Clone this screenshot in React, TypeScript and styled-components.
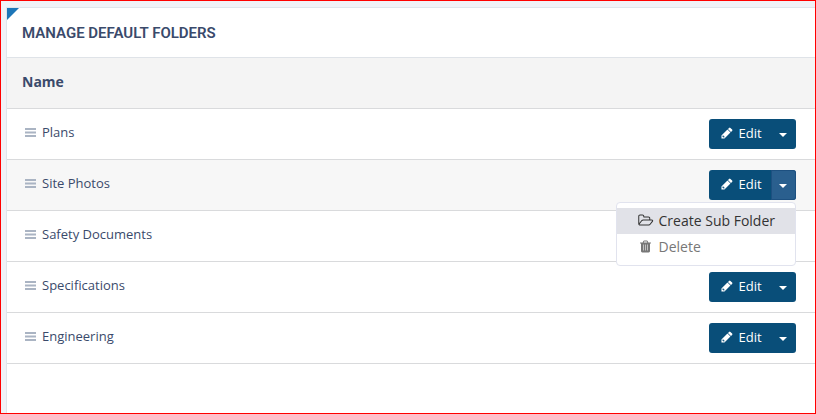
import React, { useState } from "react";
import styled, { createGlobalStyle } from "styled-components";

const GlobalStyle = createGlobalStyle`
  *, *::before, *::after { box-sizing: border-box; }
  body {
    margin: 0;
    font-family: "Open Sans", "Noto Sans", sans-serif;
    font-size: 13px;
    color: #3a4a6b;
  }
`;

const Page = styled.main`
  display: flex;
  min-height: 100vh;
  padding: 6px 0 0 5px;
  border: 1px solid #ff0000;
  background: #f0f2f7;
`;

const Panel = styled.section`
  position: relative;
  flex: 1;
  min-width: 0;
  border: solid #dfe5eb;
  border-width: 1px 0 0 1px;
  background: #ffffff;
`;

const Corner = styled.span`
  position: absolute;
  top: 0;
  left: 0;
  border-top: 12px solid #1d76b8;
  border-right: 12px solid transparent;
`;

const Title = styled.h1`
  margin: 0;
  padding: 2px 15px 0;
  border-bottom: 1px solid #dfe3e8;
  font-family: Roboto, "Open Sans", sans-serif;
  font-size: 15px;
  font-weight: 600;
  line-height: 47px;
  text-transform: uppercase;
`;

const Table = styled.table`
  width: 100%;
  border-collapse: separate;
  border-spacing: 0;
`;

const HeadCell = styled.th`
  height: 51px;
  padding: 0 15px 4px;
  border-bottom: 1px solid #d9dadc;
  background: #f4f4f4;
  font-size: 14px;
  font-weight: 700;
  text-align: left;
`;

const Row = styled.tr<{ $active: boolean }>`
  background: ${(p) => (p.$active ? "#f7f7f7" : "#ffffff")};
`;

const Cell = styled.td`
  height: 51px;
  padding: 10px 19px 10px 18px;
  border-bottom: 1px solid #d9dadc;
  vertical-align: top;
`;

const FolderName = styled.div`
  display: flex;
  align-items: center;
  gap: 6px;
  line-height: 26px;
`;

const Grip = styled.svg`
  display: block;
  width: 11px;
  height: 9px;
  fill: #aab4c3;
`;

const Actions = styled.div`
  position: relative;
  display: flex;
  justify-content: flex-end;
`;

const Button = styled.button`
  display: flex;
  align-items: center;
  justify-content: center;
  height: 30px;
  padding: 0;
  border: 0;
  background: #094e79;
  color: #ffffff;
  font: inherit;
  cursor: pointer;
`;

const EditButton = styled(Button)`
  gap: 5px;
  width: 62px;
  padding: 0 0 2px 3px;
  border-radius: 3px 0 0 3px;
`;

const ToggleButton = styled(Button)<{ $open: boolean }>`
  width: 25px;
  padding-right: 2px;
  border-radius: 0 3px 3px 0;
  background: ${(p) => (p.$open ? "#2a5f8e" : "#094e79")};
  box-shadow: ${(p) => (p.$open ? "inset 0 0 0 1px #1d5080" : "none")};
`;

const Caret = styled.span`
  margin-top: 2px;
  border: 4px solid transparent;
  border-top-color: #ffffff;
  border-bottom-width: 0;
`;

const Menu = styled.ul`
  position: absolute;
  top: calc(100% + 2px);
  right: 0;
  z-index: 1;
  min-width: 180px;
  margin: 0;
  padding: 5px 0;
  border: 1px solid #e1e3ee;
  border-radius: 4px;
  background: #ffffff;
  list-style: none;
`;

const MenuButton = styled.button<{ $highlighted: boolean }>`
  display: flex;
  align-items: center;
  gap: 4px;
  width: 100%;
  height: 26px;
  padding: 0 20px 2px;
  border: 0;
  background: ${(p) => (p.$highlighted ? "#e1e2e8" : "transparent")};
  color: ${(p) => (p.$highlighted ? "#333333" : "#777777")};
  font: inherit;
  font-size: 14px;
  white-space: nowrap;
  cursor: pointer;
`;

const Glyph = styled.svg<{ $width: number; $height: number }>`
  display: block;
  flex: none;
  width: ${(p) => p.$width}px;
  height: ${(p) => p.$height}px;
  fill: currentColor;
`;

const PencilIcon = () => (
  <Glyph $width={12} $height={12} viewBox="64 64 1664 1664" aria-hidden="true">
    <path d="M491 1536l91-91-235-235-91 91v107h128v128h107zM960 416l416 416-832 832h-416v-416zm683 96q0 53-37 90l-166 166-416-416 166-165q36-38 90-38 53 0 91 38l235 234q37 39 37 91z" />
  </Glyph>
);

const FolderIcon = () => (
  <Glyph $width={18} $height={14} viewBox="-96 -64 2304 1792" aria-hidden="true">
    <path d="M1845 931q0-35-53-35h-1088q-40 0-85.5 21.5t-71.5 52.5l-294 363q-18 24-18 40 0 35 53 35h1088q40 0 86-22t71-53l294-363q18-22 18-39zm-1141-163h768v-160q0-40-28-68t-68-28h-576q-40 0-68-28t-28-68v-64q0-40-28-68t-68-28h-320q-40 0-68 28t-28 68v853l256-315q44-53 116-87.5t140-34.5zm1269 163q0 62-46 120l-295 363q-43 53-116 87.5t-140 34.5h-1088q-92 0-158-66t-66-158v-960q0-92 66-158t158-66h320q92 0 158 66t66 158v32h544q92 0 158 66t66 158v160h192q54 0 99 24.5t67 70.5q15 32 15 68z" />
  </Glyph>
);

const TrashIcon = () => (
  <Glyph $width={18} $height={14} viewBox="-192 -64 2304 1792" aria-hidden="true">
    <path
      opacity="0.45"
      d="M512 512h768v952q0 72-32 72h-704q-32 0-32-72z"
    />
    <path d="M704 1376v-704q0-14-9-23t-23-9h-64q-14 0-23 9t-9 23v704q0 14 9 23t23 9h64q14 0 23-9t9-23zm256 0v-704q0-14-9-23t-23-9h-64q-14 0-23 9t-9 23v704q0 14 9 23t23 9h64q14 0 23-9t9-23zm256 0v-704q0-14-9-23t-23-9h-64q-14 0-23 9t-9 23v704q0 14 9 23t23 9h64q14 0 23-9t9-23zm-544-992h448l-48-117q-7-9-17-11h-317q-10 2-17 11zm928 32v64q0 14-9 23t-23 9h-96v948q0 83-47 143.5t-113 60.5h-832q-66 0-113-58.5t-47-141.5v-952h-96q-14 0-23-9t-9-23v-64q0-14 9-23t23-9h309l70-167q15-37 54-63t79-26h320q40 0 79 26t54 63l70 167h309q14 0 23 9t9 23z" />
  </Glyph>
);

const GripIcon = () => (
  <Grip viewBox="0 0 11 9" aria-hidden="true">
    <path d="M0 0h11v2H0zM0 3.5h11v2H0zM0 7h11v2H0z" />
  </Grip>
);

const folders = ["Plans", "Site Photos", "Safety Documents", "Specifications", "Engineering"];

export default function App() {
  const [openFolder, setOpenFolder] = useState<string | null>("Site Photos");

  return (
    <>
      <GlobalStyle />
      <Page>
        <Panel>
          <Corner />
          <Title>Manage Default Folders</Title>
          <Table>
            <thead>
              <tr>
                <HeadCell scope="col" colSpan={2}>Name</HeadCell>
              </tr>
            </thead>
            <tbody>
              {folders.map((name) => {
                const open = openFolder === name;
                return (
                  <Row key={name} $active={open}>
                    <Cell>
                      <FolderName>
                        <GripIcon />
                        {name}
                      </FolderName>
                    </Cell>
                    <Cell>
                      <Actions>
                        <EditButton type="button">
                          <PencilIcon />
                          Edit
                        </EditButton>
                        <ToggleButton
                          type="button"
                          $open={open}
                          aria-label={`More actions for ${name}`}
                          aria-expanded={open}
                          onClick={() => setOpenFolder(open ? null : name)}
                        >
                          <Caret />
                        </ToggleButton>
                        {open && (
                          <Menu>
                            <li>
                              <MenuButton type="button" $highlighted>
                                <FolderIcon />
                                Create Sub Folder
                              </MenuButton>
                            </li>
                            <li>
                              <MenuButton type="button" $highlighted={false}>
                                <TrashIcon />
                                Delete
                              </MenuButton>
                            </li>
                          </Menu>
                        )}
                      </Actions>
                    </Cell>
                  </Row>
                );
              })}
            </tbody>
          </Table>
        </Panel>
      </Page>
    </>
  );
}
